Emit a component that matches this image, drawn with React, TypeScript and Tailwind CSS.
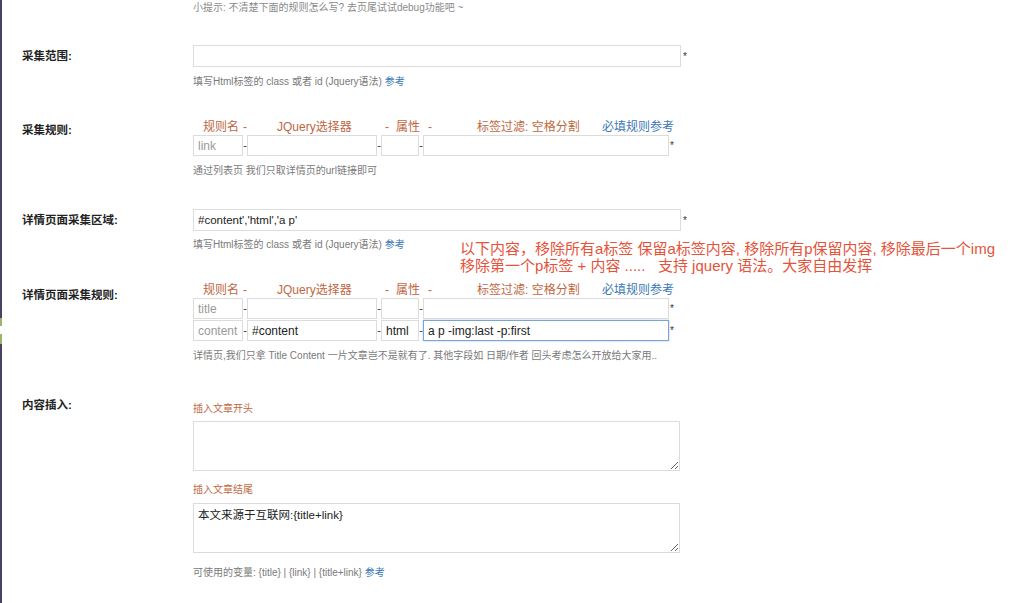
import React from 'react';

const font = { fontFamily: '"Liberation Sans", "Noto Sans CJK SC", sans-serif' };

const Dash = () => <span className="w-[4px] shrink-0 text-center text-[11px] leading-[21px] text-[#333]">-</span>;

const RuleHeader = () => (
  <div className="flex h-[14px] items-center whitespace-nowrap text-[12px] leading-[14px] text-[#c0673f]">
    <span className="ml-[10px] w-[40px] shrink-0">规则名</span>
    <span className="w-[34px] shrink-0">-</span>
    <span className="w-[108px] shrink-0">JQuery选择器</span>
    <span className="w-[11px] shrink-0">-</span>
    <span className="w-[32px] shrink-0">属性</span>
    <span className="w-[49px] shrink-0">-</span>
    <span className="w-[125px] shrink-0">标签过滤: 空格分割</span>
    <span className="text-[#3b78b5]">必填规则参考</span>
  </div>
);

interface RuleRowProps {
  name: string;
  selector?: string;
  attr?: string;
  filter?: string;
  focused?: boolean;
}

const box = 'h-[21px] shrink-0 border bg-white px-[4px] text-[12px] outline-none';

const RuleRow = ({ name, selector = '', attr = '', filter = '', focused }: RuleRowProps) => (
  <div className="flex items-center">
    <input readOnly value={name} className={`${box} w-[50px] border-[#dcdcdc] text-[#9a9a9a]`} style={font} />
    <Dash />
    <input readOnly value={selector} className={`${box} w-[130px] border-[#dcdcdc] text-[#222]`} style={font} />
    <Dash />
    <input readOnly value={attr} className={`${box} w-[38px] border-[#dcdcdc] text-[#222]`} style={font} />
    <Dash />
    <input
      readOnly
      value={filter}
      className={`${box} w-[246px] text-[#222] ${focused ? 'border-[#7aa3d8] shadow-[0_0_2px_#a9c4e8]' : 'border-[#dcdcdc]'}`}
      style={font}
    />
    <span className="ml-[1px] text-[10px] leading-[21px] text-[#333]">*</span>
  </div>
);

const Help = ({ children }: { children: React.ReactNode }) => (
  <p className="text-[10px] leading-[12px] text-[#7a7a7a]">{children}</p>
);

const Label = ({ children, className = '' }: { children: React.ReactNode; className?: string }) => (
  <div className={`w-[193px] shrink-0 pl-[20px] text-[11.5px] font-bold text-[#222] ${className}`}>{children}</div>
);

export default function App() {
  return (
    <div className="flex h-[603px] w-[1020px] overflow-hidden bg-white" style={font}>
      <div className="flex w-[2px] shrink-0 flex-col bg-[#4b4263]">
        <div className="mt-[318px] h-[8px] bg-[#9bb56a]" />
        <div className="h-[8px] bg-white" />
        <div className="h-[10px] bg-[#9bb56a]" />
      </div>

      <div className="relative flex-1">
        <div className="pl-[191px] pt-[2px]">
          <p className="text-[10px] leading-[12px] text-[#8a8a8a]">小提示: 不清楚下面的规则怎么写? 去页尾试试debug功能吧 ~</p>
        </div>

        {/* 采集范围 */}
        <div className="mt-[31px] flex">
          <Label className="leading-[22px]">采集范围:</Label>
          <div className="-ml-[2px]">
            <div className="flex items-center">
              <input readOnly className="h-[22px] w-[488px] border border-[#dcdcdc] bg-white outline-none" />
              <span className="ml-[2px] text-[10px] text-[#333]">*</span>
            </div>
            <div className="mt-[9px]">
              <Help>
                填写Html标签的 class 或者 id (Jquery语法) <span className="text-[#3b78b5]">参考</span>
              </Help>
            </div>
          </div>
        </div>

        {/* 采集规则 */}
        <div className="mt-[32px] flex">
          <Label className="mt-[3px] leading-[14px]">采集规则:</Label>
          <div className="-ml-[2px]">
            <RuleHeader />
            <div className="mt-[1px]">
              <RuleRow name="link" />
            </div>
            <div className="mt-[9px]">
              <Help>通过列表页 我们只取详情页的url链接即可</Help>
            </div>
          </div>
        </div>

        {/* 详情页面采集区域 */}
        <div className="mt-[32px] flex">
          <Label className="leading-[22px]">详情页面采集区域:</Label>
          <div className="-ml-[2px]">
            <div className="flex items-center">
              <input
                readOnly
                value="#content','html','a p'"
                className="h-[22px] w-[488px] border border-[#dcdcdc] bg-white px-[4px] text-[11.5px] text-[#222] outline-none"
                style={font}
              />
              <span className="ml-[2px] text-[10px] text-[#333]">*</span>
            </div>
            <div className="mt-[8px]">
              <Help>
                填写Html标签的 class 或者 id (Jquery语法) <span className="text-[#3b78b5]">参考</span>
              </Help>
            </div>
          </div>
        </div>

        {/* 详情页面采集规则 */}
        <div className="mt-[32px] flex">
          <Label className="mt-[5px] leading-[14px]">详情页面采集规则:</Label>
          <div className="-ml-[2px]">
            <RuleHeader />
            <div className="mt-[1px]">
              <RuleRow name="title" />
            </div>
            <div className="mt-[1px]">
              <RuleRow name="content" selector="#content" attr="html" filter="a p -img:last -p:first" focused />
            </div>
            <div className="mt-[9px]">
              <Help>详情页,我们只拿 Title Content 一片文章岂不是就有了. 其他字段如 日期/作者 回头考虑怎么开放给大家用..</Help>
            </div>
          </div>
        </div>

        {/* 内容插入 */}
        <div className="mt-[35px] flex">
          <Label className="leading-[16px]">内容插入:</Label>
          <div className="-ml-[2px] pt-[6px]">
            <p className="text-[10px] leading-[12px] text-[#c0673f]">插入文章开头</p>
            <textarea readOnly className="mt-[6px] block h-[50px] w-[487px] border border-[#dcdcdc] bg-white outline-none" />
            <p className="mt-[13px] text-[10px] leading-[12px] text-[#c0673f]">插入文章结尾</p>
            <textarea
              readOnly
              value="本文来源于互联网:{title+link}"
              className="mt-[7px] block h-[50px] w-[487px] border border-[#dcdcdc] bg-white px-[4px] py-[3px] text-[11.5px] text-[#222] outline-none"
              style={font}
            />
            <div className="mt-[14px]">
              <Help>
                可使用的变量: {'{title}'} | {'{link}'} | {'{title+link}'} <span className="text-[#3b78b5]">参考</span>
              </Help>
            </div>
          </div>
        </div>

        {/* annotation */}
        <div className="absolute left-[458px] top-[240px] whitespace-nowrap text-[15px] leading-[17px] text-[#e5533a]">
          <p>以下内容，移除所有a标签 保留a标签内容, 移除所有p保留内容, 移除最后一个img</p>
          <p>移除第一个p标签 + 内容 .....&nbsp;&nbsp;&nbsp;支持 jquery 语法。大家自由发挥</p>
        </div>
      </div>
    </div>
  );
}
